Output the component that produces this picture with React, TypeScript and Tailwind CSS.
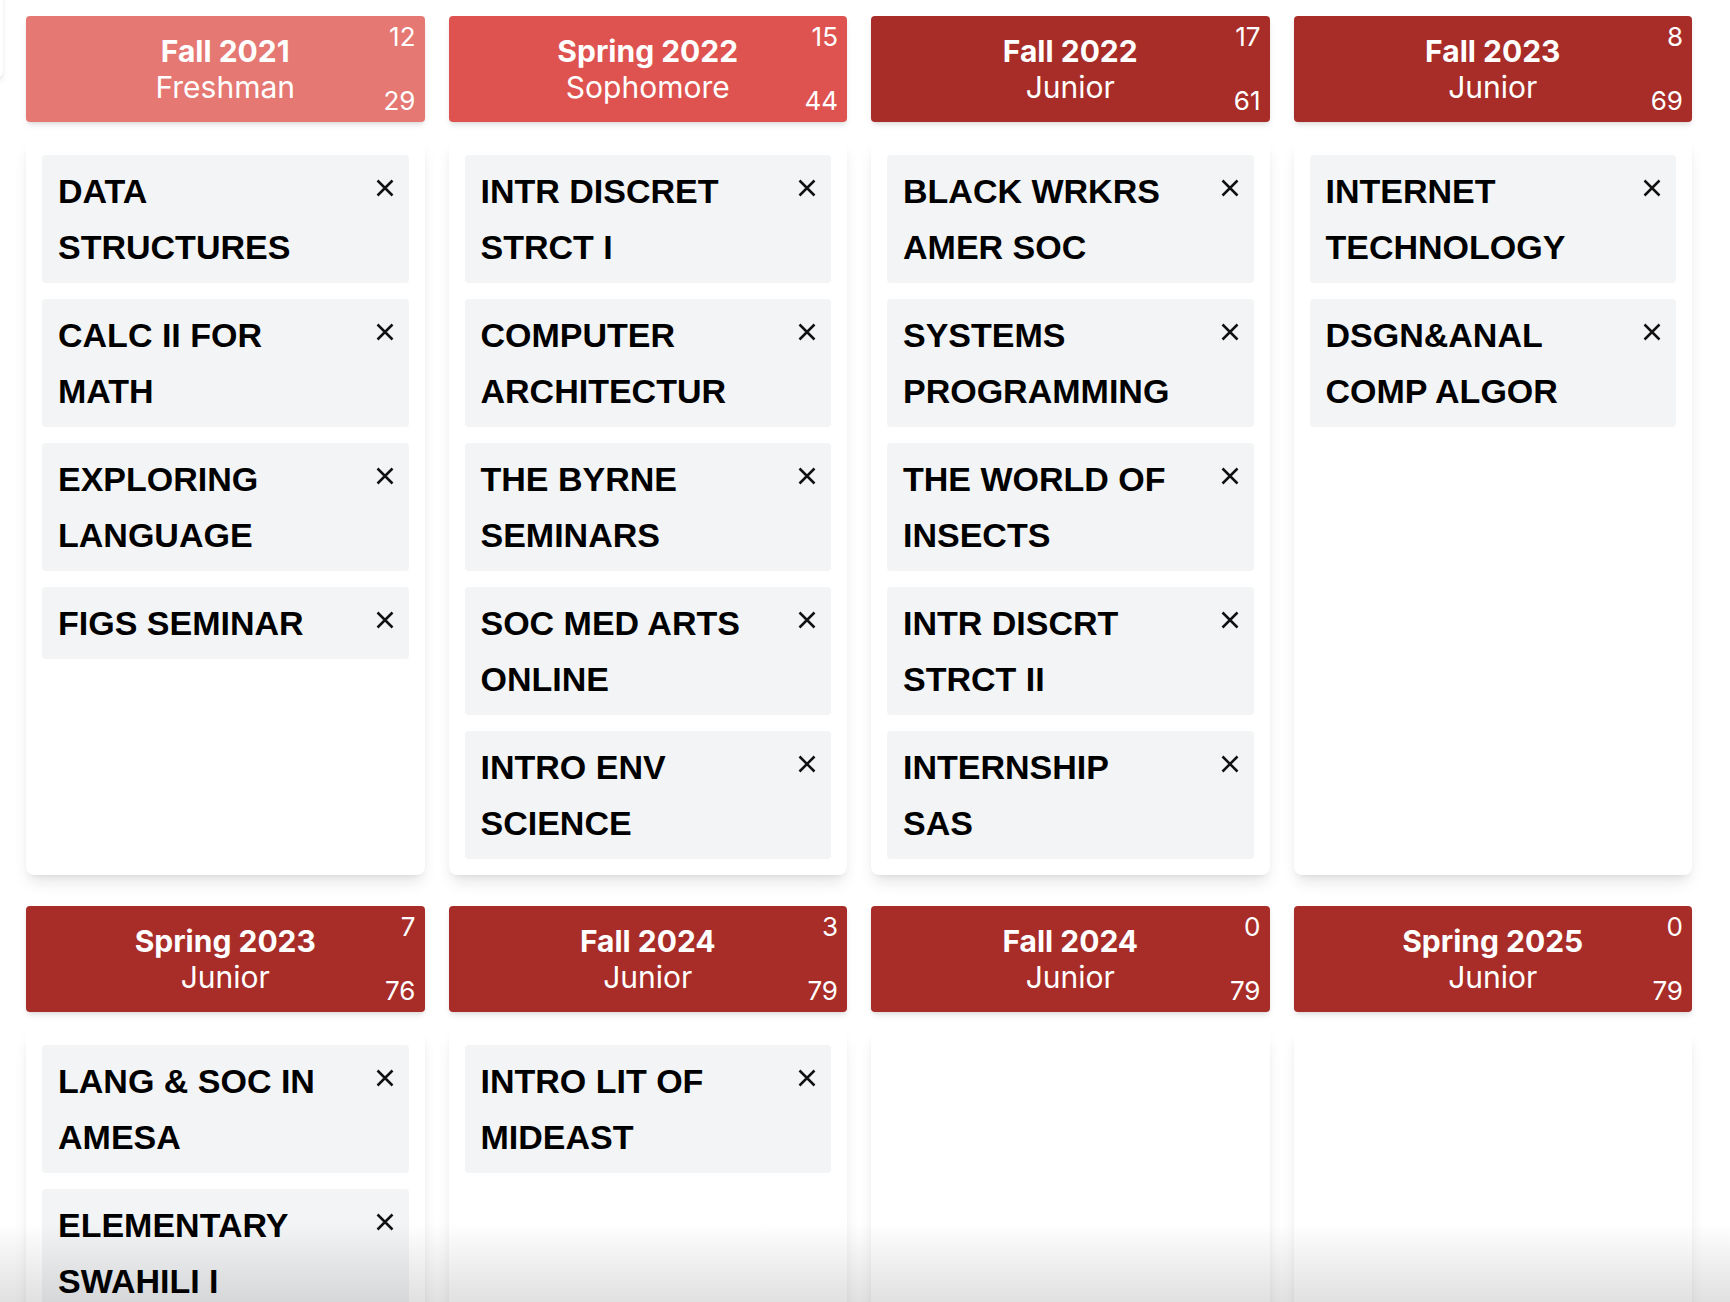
import React from "react";

type Sem = {
  title: string;
  level: string;
  top: number;
  bottom: number;
  color: string;
  courses: string[];
};

const sems: Sem[] = [
  { title: "Fall 2021", level: "Freshman", top: 12, bottom: 29, color: "bg-[#e57873]", courses: ["DATA STRUCTURES", "CALC II FOR MATH", "EXPLORING LANGUAGE", "FIGS SEMINAR"] },
  { title: "Spring 2022", level: "Sophomore", top: 15, bottom: 44, color: "bg-[#de5350]", courses: ["INTR DISCRET STRCT I", "COMPUTER ARCHITECTUR", "THE BYRNE SEMINARS", "SOC MED ARTS ONLINE", "INTRO ENV SCIENCE"] },
  { title: "Fall 2022", level: "Junior", top: 17, bottom: 61, color: "bg-[#a82d28]", courses: ["BLACK WRKRS AMER SOC", "SYSTEMS PROGRAMMING", "THE WORLD OF INSECTS", "INTR DISCRT STRCT II", "INTERNSHIP SAS"] },
  { title: "Fall 2023", level: "Junior", top: 8, bottom: 69, color: "bg-[#a82d28]", courses: ["INTERNET TECHNOLOGY", "DSGN&ANAL COMP ALGOR"] },
  { title: "Spring 2023", level: "Junior", top: 7, bottom: 76, color: "bg-[#a82d28]", courses: ["LANG & SOC IN AMESA", "ELEMENTARY SWAHILI I"] },
  { title: "Fall 2024", level: "Junior", top: 3, bottom: 79, color: "bg-[#a82d28]", courses: ["INTRO LIT OF MIDEAST"] },
  { title: "Fall 2024", level: "Junior", top: 0, bottom: 79, color: "bg-[#a82d28]", courses: [] },
  { title: "Spring 2025", level: "Junior", top: 0, bottom: 79, color: "bg-[#a82d28]", courses: [] },
];

function XIcon() {
  return (
    <svg width="18" height="18" viewBox="0 0 18 18" className="shrink-0 mt-[16px]">
      <path d="M1.5 1.5 L16.5 16.5 M16.5 1.5 L1.5 16.5" stroke="#111" strokeWidth="2.5" strokeLinecap="butt" />
    </svg>
  );
}

function Course({ name }: { name: string }) {
  return (
    <div className="flex items-start gap-4 bg-[#f3f4f6] rounded-[4px] pl-4 pr-[15px] py-2">
      <div className="flex-1 pr-[20px] text-[34px] leading-[56px] font-bold text-black font-['Liberation_Sans',Arial,sans-serif]">
        {name}
      </div>
      <XIcon />
    </div>
  );
}

function Semester({ s }: { s: Sem }) {
  return (
    <div className="flex flex-col gap-[17px]">
      <div className={`relative ${s.color} rounded-[4px] shadow-md py-[17px] text-white text-center font-['Inter',sans-serif]`}>
        <div className="text-[30px] leading-[36px] font-bold">{s.title}</div>
        <div className="text-[30px] leading-[36px] font-normal">{s.level}</div>
        <div className="absolute top-[5px] right-[9px] text-[26px] leading-[32px]">{s.top}</div>
        <div className="absolute bottom-[5px] right-[9px] text-[26px] leading-[32px]">{s.bottom}</div>
      </div>
      <div className="flex-1 bg-white rounded-lg shadow-lg p-4 flex flex-col gap-4">
        {s.courses.map((c, i) => (
          <Course key={i} name={c} />
        ))}
      </div>
    </div>
  );
}

export default function App() {
  return (
    <div className="relative w-[1730px] h-[1302px] overflow-hidden bg-white">
      <div className="absolute left-[-100px] top-[-10px] w-[103px] h-[88px] bg-white rounded-md shadow-md" />
      <div className="pl-[26px] pr-[38px] pt-[16px] grid grid-cols-4 gap-x-[24px] gap-y-[31px]">
        {sems.map((s, i) => (
          <Semester key={i} s={s} />
        ))}
      </div>
      <div className="absolute left-0 right-0 bottom-0 h-[80px] pointer-events-none bg-gradient-to-b from-black/0 to-black/[0.12]" />
    </div>
  );
}
